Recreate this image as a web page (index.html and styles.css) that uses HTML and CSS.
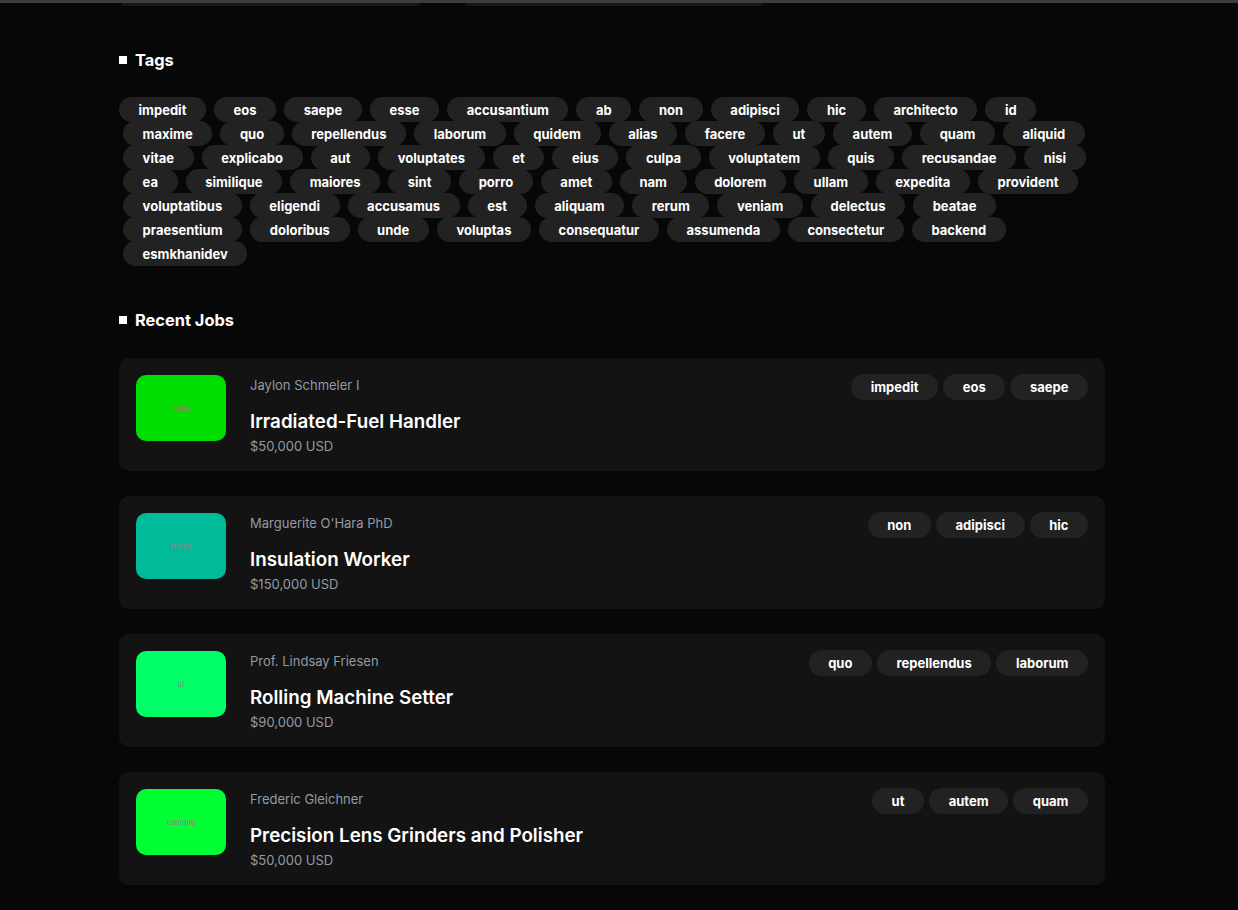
FILE: index.html
```html
<!DOCTYPE html>
<html>
<head>
<meta charset="utf-8">
<link rel="stylesheet" href="styles.css">
</head>
<body>
<div class="topbar"></div>
<div class="topcards"><div class="stub"></div><div class="stub"></div></div>
<main class="wrap">
  <h2 class="heading"><span class="sq"></span>Tags</h2>
  <div class="tags">
    <span class="tag first">impedit</span><span class="tag">eos</span><span class="tag">saepe</span><span class="tag">esse</span><span class="tag">accusantium</span><span class="tag">ab</span><span class="tag">non</span><span class="tag">adipisci</span><span class="tag">hic</span><span class="tag">architecto</span><span class="tag">id</span>
    <span class="tag">maxime</span><span class="tag">quo</span><span class="tag">repellendus</span><span class="tag">laborum</span><span class="tag">quidem</span><span class="tag">alias</span><span class="tag">facere</span><span class="tag">ut</span><span class="tag">autem</span><span class="tag">quam</span><span class="tag">aliquid</span>
    <span class="tag">vitae</span><span class="tag">explicabo</span><span class="tag">aut</span><span class="tag">voluptates</span><span class="tag">et</span><span class="tag">eius</span><span class="tag">culpa</span><span class="tag">voluptatem</span><span class="tag">quis</span><span class="tag">recusandae</span><span class="tag">nisi</span>
    <span class="tag">ea</span><span class="tag">similique</span><span class="tag">maiores</span><span class="tag">sint</span><span class="tag">porro</span><span class="tag">amet</span><span class="tag">nam</span><span class="tag">dolorem</span><span class="tag">ullam</span><span class="tag">expedita</span><span class="tag">provident</span>
    <span class="tag">voluptatibus</span><span class="tag">eligendi</span><span class="tag">accusamus</span><span class="tag">est</span><span class="tag">aliquam</span><span class="tag">rerum</span><span class="tag">veniam</span><span class="tag">delectus</span><span class="tag">beatae</span>
    <span class="tag">praesentium</span><span class="tag">doloribus</span><span class="tag">unde</span><span class="tag">voluptas</span><span class="tag">consequatur</span><span class="tag">assumenda</span><span class="tag">consectetur</span><span class="tag">backend</span>
    <span class="tag">esmkhanidev</span>
  </div>

  <h2 class="heading jobs-h"><span class="sq"></span>Recent Jobs</h2>
  <div class="jobs">
    <div class="job">
      <div class="logo" style="background:#00dd00"><span>nulla</span></div>
      <div class="info">
        <div class="company">Jaylon Schmeler I</div>
        <div class="title">Irradiated-Fuel Handler</div>
        <div class="salary">$50,000 USD</div>
      </div>
      <div class="jtags"><span class="tag">impedit</span><span class="tag">eos</span><span class="tag">saepe</span></div>
    </div>
    <div class="job">
      <div class="logo" style="background:#00bb99"><span>labore</span></div>
      <div class="info">
        <div class="company">Marguerite O'Hara PhD</div>
        <div class="title">Insulation Worker</div>
        <div class="salary">$150,000 USD</div>
      </div>
      <div class="jtags"><span class="tag">non</span><span class="tag">adipisci</span><span class="tag">hic</span></div>
    </div>
    <div class="job">
      <div class="logo" style="background:#00ff66"><span>ut</span></div>
      <div class="info">
        <div class="company">Prof. Lindsay Friesen</div>
        <div class="title">Rolling Machine Setter</div>
        <div class="salary">$90,000 USD</div>
      </div>
      <div class="jtags"><span class="tag">quo</span><span class="tag">repellendus</span><span class="tag">laborum</span></div>
    </div>
    <div class="job">
      <div class="logo" style="background:#00ff33"><span>cumque</span></div>
      <div class="info">
        <div class="company">Frederic Gleichner</div>
        <div class="title">Precision Lens Grinders and Polisher</div>
        <div class="salary">$50,000 USD</div>
      </div>
      <div class="jtags"><span class="tag">ut</span><span class="tag">autem</span><span class="tag">quam</span></div>
    </div>
  </div>
</main>
</body>
</html>
```
FILE: styles.css
```css
* { box-sizing: border-box; }
html, body { margin: 0; padding: 0; }
body {
  background: #070707;
  color: #fff;
  font-family: Inter, "Liberation Sans", sans-serif;
  height: 910px;
  overflow: hidden;
}
.topbar { height: 3px; background: #3d3d3d; }
.topcards { display: flex; height: 3px; padding-left: 122px; gap: 45px; }
.stub { width: 298px; height: 3px; background: #161616; border-radius: 0 0 4px 4px; }
.wrap { width: 986px; margin-left: 119px; }
.heading {
  margin: 0;
  display: flex;
  align-items: center;
  gap: 8px;
  font-size: 16.4px;
  font-weight: 700;
  height: 22px;
  margin-top: 43px;
}
.sq { width: 8px; height: 8px; background: #fff; display: inline-block; }
.tags {
  display: flex;
  flex-wrap: wrap;
  column-gap: 8px;
  margin-top: 26px;
  padding-left: 4px;
}
.tag {
  display: inline-flex;
  align-items: center;
  justify-content: center;
  height: 25px;
  margin-bottom: -1px;
  padding: 0 19.6px;
  border-radius: 13px;
  background: #222222;
  color: #fff;
  font-size: 13px;
  font-weight: 700;
}
.tag.first { margin-left: -4px; }
.jobs-h { margin-top: 44px; }
.jobs { margin-top: 27px; display: flex; flex-direction: column; gap: 25px; }
.job {
  background: #131313;
  border-radius: 10px;
  height: 113px;
  padding: 17px;
  display: flex;
  align-items: flex-start;
}
.logo {
  width: 90px;
  height: 66px;
  border-radius: 10px;
  flex: none;
  display: flex;
  align-items: center;
  justify-content: center;
}
.logo span { font-size: 7.5px; color: #888; }
.info { margin-left: 24px; flex: 1; }
.company { font-size: 13px; color: #949aa6; margin-top: 2px; line-height: 16px; }
.title { font-size: 18.8px; font-weight: 600; margin-top: 17px; line-height: 24px; }
.salary { font-size: 13px; color: #949aa6; line-height: 16px; margin-top: 4px; }
.jtags { display: flex; gap: 5px; margin-top: -1px; }
.jtags .tag { height: 26px; margin-bottom: 0; }
```
